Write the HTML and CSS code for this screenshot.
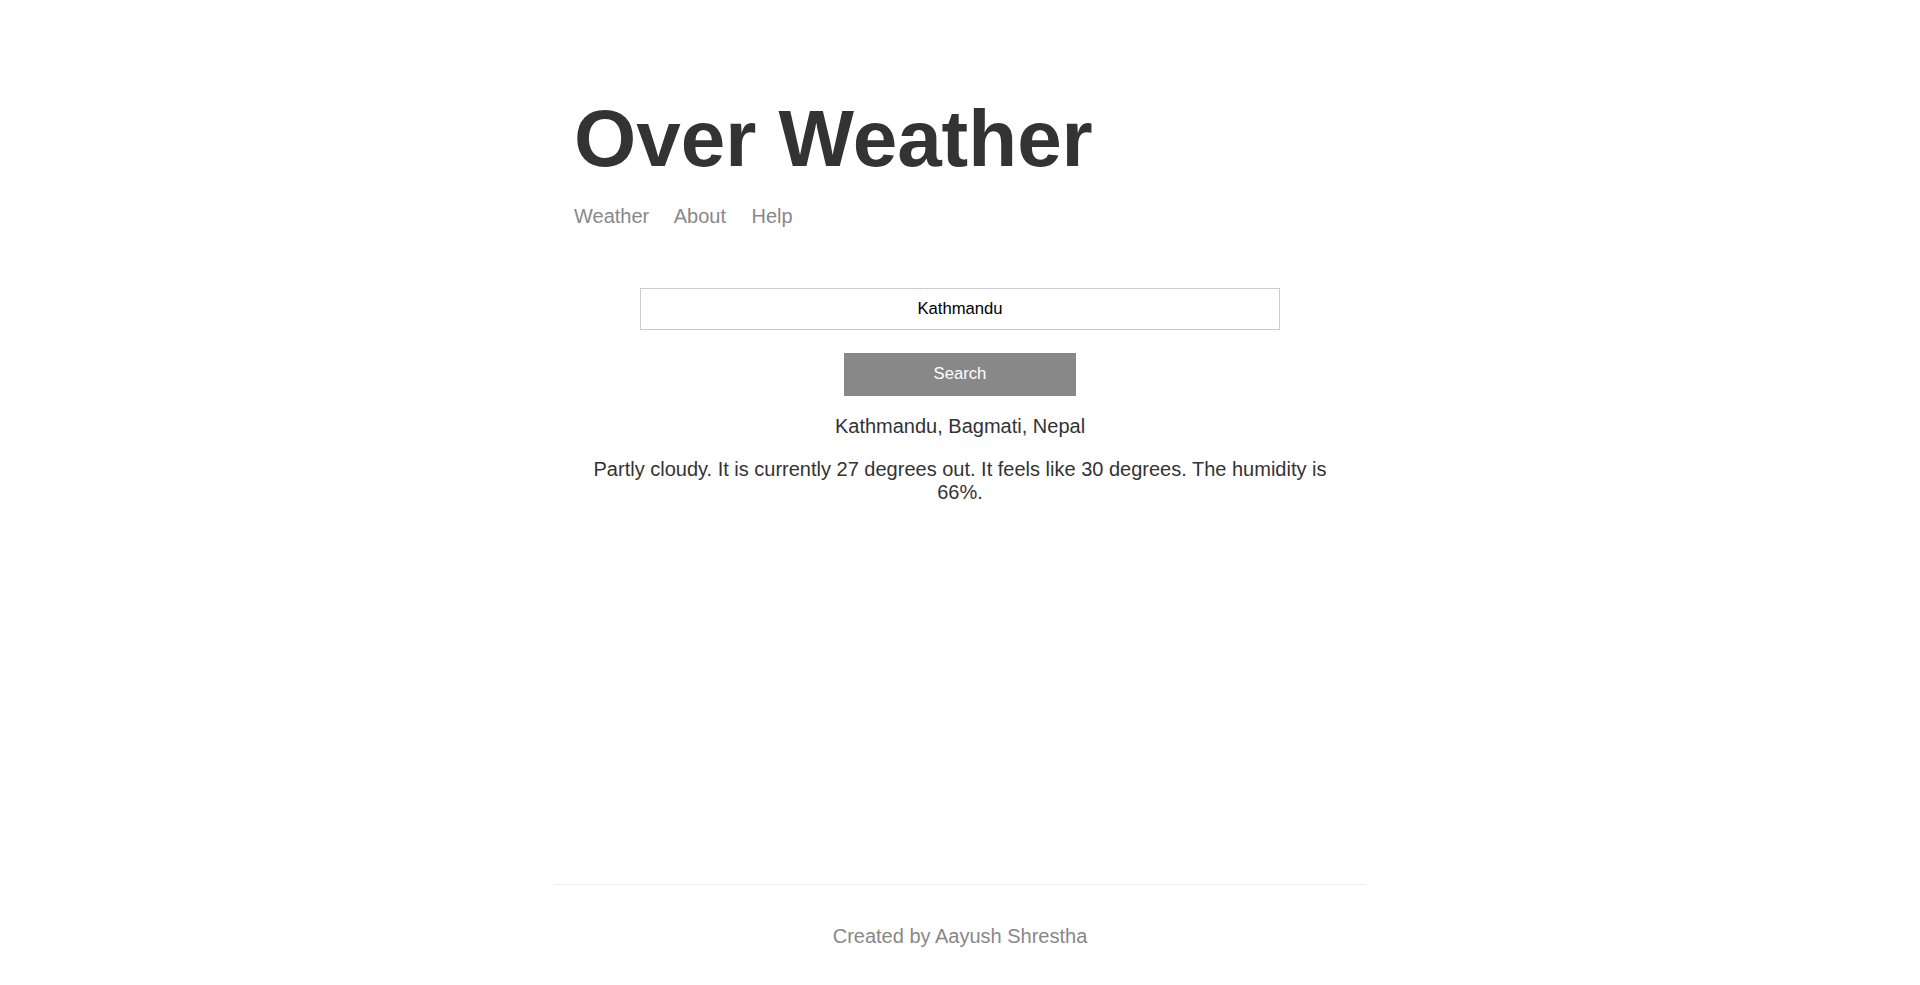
FILE: index.html
```html
<!DOCTYPE html>
<html lang="en">
<head>
<meta charset="utf-8">
<title>Over Weather</title>
<link rel="stylesheet" href="styles.css">
</head>
<body>
<div class="page">
  <header class="site-header">
    <h1 class="title">Over Weather</h1>
    <nav class="nav">
      <a href="#">Weather</a>
      <a href="#">About</a>
      <a href="#">Help</a>
    </nav>
  </header>
  <main class="main-content">
    <form class="search-form">
      <input class="search-input" type="text" value="Kathmandu">
      <button class="search-button" type="button">Search</button>
    </form>
    <p class="location">Kathmandu, Bagmati, Nepal</p>
    <p class="forecast">Partly cloudy. It is currently 27 degrees out. It feels like 30 degrees. The humidity is 66%.</p>
  </main>
  <footer class="footer">
    <p class="footer-text">Created by Aayush Shrestha</p>
  </footer>
</div>
</body>
</html>
```

FILE: styles.css
```css
html, body {
  margin: 0;
  padding: 0;
  background: #ffffff;
}

body {
  font-family: "Liberation Sans", Arial, sans-serif;
  color: #333333;
}

.page {
  max-width: 812px;
  margin: 0 auto;
  min-height: 100vh;
  display: flex;
  flex-direction: column;
  box-sizing: border-box;
}

.site-header {
  padding: 93px 20px 0;
  margin-bottom: 60px;
}

.title {
  margin: 0 0 20px;
  font-size: 80px;
  line-height: 92px;
  font-weight: bold;
  color: #333333;
}

.nav {
  font-size: 20px;
  line-height: 23px;
}

.nav a {
  color: #888888;
  text-decoration: none;
  margin-right: 20px;
}

.main-content {
  flex-grow: 1;
  padding: 0 20px;
  text-align: center;
}

.search-form {
  display: flex;
  flex-direction: column;
  align-items: center;
  gap: 23px;
  margin: 0;
}

.search-input {
  box-sizing: border-box;
  width: 640px;
  height: 42px;
  border: 1px solid #cccccc;
  padding: 0 10px;
  font-family: "Liberation Sans", Arial, sans-serif;
  font-size: 16.67px;
  color: #000000;
  text-align: center;
  outline: none;
  background: #ffffff;
}

.search-button {
  box-sizing: border-box;
  width: 232px;
  height: 43px;
  border: 1px solid #888888;
  background: #888888;
  color: #ffffff;
  font-family: "Liberation Sans", Arial, sans-serif;
  font-size: 16.67px;
  padding: 0 0 2px;
  cursor: pointer;
}

.location {
  margin: 19px 0 0;
  font-size: 20px;
  line-height: 23px;
}

.forecast {
  margin: 20px 0 0;
  font-size: 20px;
  line-height: 23px;
}

.footer {
  border-top: 1px solid #eeeeee;
  padding: 40px 0 37px;
  text-align: center;
  color: #888888;
}

.footer-text {
  margin: 0;
  font-size: 20px;
  line-height: 23px;
}
```
